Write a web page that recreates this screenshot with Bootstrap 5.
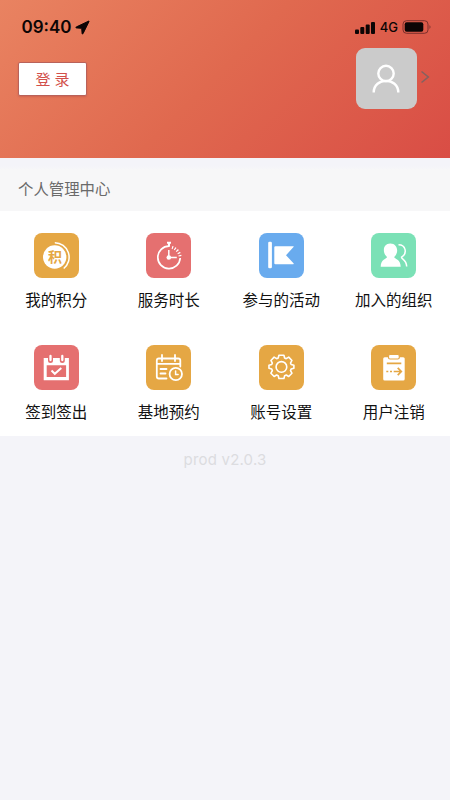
<!DOCTYPE html>
<html lang="zh-CN">
<head>
<meta charset="utf-8">
<meta name="viewport" content="width=device-width, initial-scale=1">
<title>个人管理中心</title>
<link href="https://cdn.jsdelivr.net/npm/bootstrap@5.3.0/dist/css/bootstrap.min.css" rel="stylesheet">
<style>
body{background:#f4f4f9;font-family:"Liberation Sans","Noto Sans CJK SC",sans-serif;color:#111;min-height:800px}
.hero{height:157.500px;background:linear-gradient(135deg,#e98361 0%,#e0694f 48%,#d94d45 100%)}
.status{height:48px;padding:6px 18px 0 21.500px;color:#0c0505;font-family:Inter,sans-serif}
.clock{font-size:17px;font-weight:600;line-height:20px}
.pointer{margin-left:3.500px}
.net{font-size:13px;font-weight:500;line-height:16px}
.account{padding:0 20.500px 0 18px}
.login{margin-top:14px;width:69px;height:34px;background:#fff;border:1px solid #b9625a;border-radius:2px;color:#d2504a;font-size:15px;line-height:1;box-shadow:0 1px 2px #a0404055}
.avatar{width:61px;height:61px;border-radius:9px;background:#cbcbcb}
.avatar svg{margin:-2px 0 0 -1px}
.chevron{margin:-3px 0 0 3.500px}
.section-title{height:53.500px;padding:11px 18px 0;background:linear-gradient(#f4f4f9 8px,#f7f7f8 12px);color:#6a6a6a;font-size:15.4px}
.services{height:225px}
.service{height:112.500px;padding-top:22px;font-size:15.5px}
.service svg{width:45px;height:45px;border-radius:8px}
.service span{line-height:22px;margin-top:12px;white-space:nowrap}
.service:nth-child(n+5){padding-top:21.500px}
.service:nth-child(n+5) span{margin-top:11.500px}
.gold{background:#e5a744}.rose{background:#e57070}.sky{background:#69abee}.mint{background:#7be1b6}
.version{font:15px/20px Inter,sans-serif;letter-spacing:.2px;color:#dcdce0;margin-top:13.500px}
</style>
</head>
<body>
<header class="hero">
  <div class="status d-flex justify-content-between align-items-center">
    <div class="d-flex align-items-center">
      <span class="clock">09:40</span>
      <svg class="pointer" width="15" height="15" viewBox="0 0 15 15"><path d="M13.700 1.100 1.200 7q-.8.600.2.900l5.300.4.400 5.200q.3 1 .9.200L14 1.500q.2-.6-.3-.4z" fill="currentColor" stroke="currentColor" stroke-linejoin="round"/></svg>
    </div>
    <div class="d-flex align-items-center">
      <svg width="21" height="13" viewBox="0 0 21 13" fill="currentColor"><rect x="0" y="8.500" width="4" height="4.500" rx="1"/><rect x="5.300" y="6" width="4" height="7" rx="1"/><rect x="10.700" y="3.500" width="4" height="9.500" rx="1"/><rect x="16" y="1" width="4" height="12" rx="1"/></svg>
      <span class="net ms-1">4G</span>
      <svg class="ms-1" width="30" height="14" viewBox="0 0 30 14"><rect x="1" y=".7" width="25" height="12.600" rx="3.500" fill="none" stroke="#7c302c"/><rect x="2.700" y="2.300" width="18.600" height="9.400" rx="2" fill="currentColor"/><path d="M27.500 5v4q2-2 0-4z" fill="#7c302c"/></svg>
    </div>
  </div>
  <div class="account d-flex justify-content-between align-items-start">
    <button class="login p-0" type="button">登 录</button>
    <div class="d-flex align-items-center">
      <div class="avatar d-flex align-items-center justify-content-center">
        <svg width="30" height="30" viewBox="0 0 30 30" fill="none" stroke="#fff" stroke-width="2.400"><circle cx="15" cy="10.500" r="7.700"/><path d="M2.700 29.500C2.700 14 27.300 14 27.300 29.500"/></svg>
      </div>
      <svg class="chevron" width="9" height="14" viewBox="0 0 9 14" fill="none" stroke="#85615f" stroke-width="1.600"><path d="M.5 1.500 7.300 7 .5 12.500"/></svg>
    </div>
  </div>
</header>
<main>
  <div class="section-title d-flex align-items-center">个人管理中心</div>
  <div class="services row row-cols-4 g-0 bg-white">
    <div class="service col d-flex flex-column align-items-center">
      <svg class="gold" viewBox="0 0 45 45"><circle cx="20.700" cy="24" r="11.700" fill="#fff"/><path d="M20.800 9.700A14.500 14.500 0 0 1 29.700 35.500" fill="none" stroke="#fff" stroke-width="1.500"/><text x="20.900" y="29.200" text-anchor="middle" font-size="14" font-weight="700" fill="#e5a744">积</text></svg>
      <span>我的积分</span>
    </div>
    <div class="service col d-flex flex-column align-items-center">
      <svg class="rose" viewBox="0 0 45 45" fill="none" stroke="#fff" stroke-width="1.700"><path d="M23 13.200A11.200 11.200 0 1 0 34.200 25"/><path d="M21 9.700h4M23 9.700v4" stroke-width="2"/><path d="M26 14.400A11.200 11.200 0 0 1 34.200 24" stroke-width="3" stroke-dasharray="1.200 1.600"/><path d="M22.800 17v8M22.800 24.500h8" stroke-width="1.500"/><circle cx="22.800" cy="24.500" r="2.300" fill="#fff" stroke="none"/></svg>
      <span>服务时长</span>
    </div>
    <div class="service col d-flex flex-column align-items-center">
      <svg class="sky" viewBox="0 0 45 45" fill="#fff"><rect x="9.200" y="8.800" width="3.700" height="26.500" rx="1.300"/><path d="M16.500 13.200h17.800q.8.300.2.900L27 22.300l7.500 8q.6.800-.2.900H16.500q-1.200 0-1.200-1V14.200q0-1 1.200-1z"/></svg>
      <span>参与的活动</span>
    </div>
    <div class="service col d-flex flex-column align-items-center">
      <svg class="mint" viewBox="0 0 45 45" fill="#fff"><path d="M19.300 10.600c-7.600 0-8.200 9.400-3.300 13.300-.2 2-6.300 2-6.300 9.800h20c0-7.800-6.300-7.800-6.500-9.800 5-3.900 3.700-13.300-3.900-13.300z"/><path d="M27.500 11.700c7.500 0 9 9 3 12.500 0 2 5 2.300 5.200 9.300" fill="none" stroke="#fff" stroke-width="1.500"/></svg>
      <span>加入的组织</span>
    </div>
    <div class="service col d-flex flex-column align-items-center">
      <svg class="rose" viewBox="0 0 45 45"><path d="M9.700 13h25.200v22.300H9.700zM12.700 20.300v11.800h19.400V20.300z" fill="#fff" fill-rule="evenodd"/><path d="M16.500 10.500v5M28.300 10.500v5" stroke="#e57070" stroke-width="5" stroke-linecap="round"/><path d="M16.500 11v4M28.300 11v4" stroke="#fff" stroke-width="2.300" stroke-linecap="round"/><path d="m17.500 25.500 3.300 3.300 6.500-5.700" fill="none" stroke="#fff" stroke-width="2"/></svg>
      <span>签到签出</span>
    </div>
    <div class="service col d-flex flex-column align-items-center">
      <svg class="gold" viewBox="0 0 45 45" fill="none" stroke="#fff" stroke-width="1.800" stroke-linecap="round"><path d="M20.500 33.500h-7.700q-2 0-2-2v-16q0-2 2-2h19.500q2 0 2 2v6M10.800 18.800h23.500M16 10v6M29 10v6M14.500 24h6M14.500 28.500h5"/><circle cx="29.800" cy="29" r="6.200"/><path d="M29.600 26v3.400h2.500" stroke-width="1.500"/></svg>
      <span>基地预约</span>
    </div>
    <div class="service col d-flex flex-column align-items-center">
      <svg class="gold" viewBox="0 0 45 45" fill="none" stroke="#fff" stroke-width="1.800" stroke-linejoin="round"><g transform="translate(2.400 2.200) scale(.89)"><path d="M19.700 9h5.600l.8 3.100 1.800.8 2.800-1.700 3.600 3.700-1.600 2.900.7 1.700 3.100.8v3.400l-3.100.9-.7 1.700 1.600 2.900-3.600 3.700-2.800-1.700-1.800.8-.8 3.100h-5.600l-.8-3.100-1.800-.8-2.800 1.700-3.600-3.700 1.600-2.900-.7-1.700-3.100-.9v-3.400l3.100-.8.7-1.700-1.600-2.900 3.600-3.700 2.800 1.700 1.800-.8z"/><circle cx="22.500" cy="22.200" r="6"/></g></svg>
      <span>账号设置</span>
    </div>
    <div class="service col d-flex flex-column align-items-center">
      <svg class="gold" viewBox="0 0 45 45"><rect x="12.200" y="12.300" width="21.500" height="23.300" rx="1.500" fill="#fff"/><rect x="17.500" y="9.500" width="10.800" height="4.500" rx="1.500" fill="#fff" stroke="#e5a744" stroke-width="1.200"/><path d="M15.800 18.300h14.500M15.300 26.500h2M19 26.500h2M22.700 26.500h7.500M26.700 22.900l3.600 3.600-3.600 3.600" fill="none" stroke="#e5a744" stroke-width="1.700"/></svg>
      <span>用户注销</span>
    </div>
  </div>
</main>
<footer class="version text-center">prod v2.0.3</footer>
<script src="https://cdn.jsdelivr.net/npm/bootstrap@5.3.0/dist/js/bootstrap.bundle.min.js"></script>
</body>
</html>
